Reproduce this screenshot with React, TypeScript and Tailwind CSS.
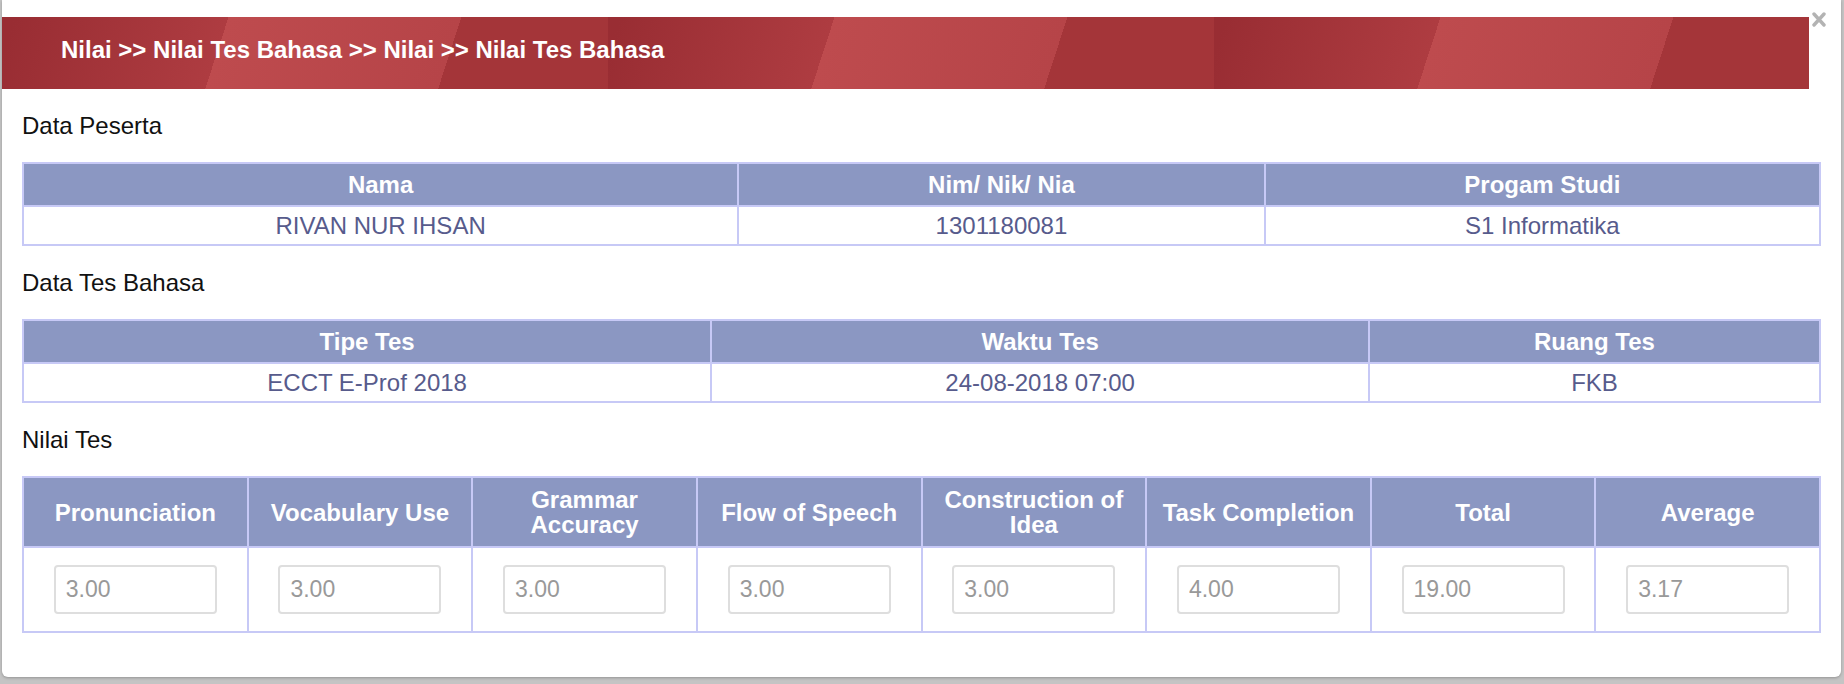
const font = "font-['Liberation_Sans',Arial,Helvetica,sans-serif]"

const peserta = {
  cols: ["39.8%", "29.3%", "30.9%"],
  head: ["Nama", "Nim/ Nik/ Nia", "Progam Studi"],
  row: ["RIVAN NUR IHSAN", "1301180081", "S1 Informatika"],
}

const tes = {
  cols: ["38.3%", "36.6%", "25.1%"],
  head: ["Tipe Tes", "Waktu Tes", "Ruang Tes"],
  row: ["ECCT E-Prof 2018", "24-08-2018 07:00", "FKB"],
}

const nilai = [
  { label: "Pronunciation", value: "3.00" },
  { label: "Vocabulary Use", value: "3.00" },
  { label: "Grammar Accuracy", value: "3.00" },
  { label: "Flow of Speech", value: "3.00" },
  { label: "Construction of Idea", value: "3.00" },
  { label: "Task Completion", value: "4.00" },
  { label: "Total", value: "19.00" },
  { label: "Average", value: "3.17" },
]

function SectionLabel({ children }: { children: string }) {
  return <div className="h-[73px] flex items-center text-[24px] leading-[28px] text-[#111]">{children}</div>
}

function InfoTable({ cols, head, row }: { cols: string[]; head: string[]; row: string[] }) {
  return (
    <table className="w-full table-fixed border-collapse border-2 border-[#c7c9f6]">
      <colgroup>
        {cols.map((w, i) => (
          <col key={i} style={{ width: w }} />
        ))}
      </colgroup>
      <thead>
        <tr className="bg-[#8b97c2]">
          {head.map((h) => (
            <th key={h} className="border-2 border-[#c7c9f6] py-[8px] px-2 text-[24px] leading-[25px] font-bold text-white text-center">
              {h}
            </th>
          ))}
        </tr>
      </thead>
      <tbody>
        <tr>
          {row.map((c) => (
            <td key={c} className="border-2 border-[#c7c9f6] py-[6px] px-2 text-[24px] leading-[25px] text-[#575b8c] text-center">
              {c}
            </td>
          ))}
        </tr>
      </tbody>
    </table>
  )
}

export default function App() {
  return (
    <div className={`w-[1844px] h-[684px] bg-[#c4c4c4] overflow-hidden ${font}`}>
      <div className="relative ml-[2px] w-[1839px] h-[677px] bg-white rounded-b-[6px] shadow-[0_1px_3px_rgba(0,0,0,0.25)] pt-[17px]">
        {/* header bar */}
        <div className="w-[1807px] h-[72px] flex items-center pb-[7px] pl-[59px] bg-repeat-x bg-[length:606px_100%] bg-[linear-gradient(108deg,#992d33_2%,#ae3c41_36%,#be4b4e_36%,#b64448_73%,#a43539_73%)]">
          <h3 className="text-[24px] leading-[28px] font-bold text-white">
            Nilai &gt;&gt; Nilai Tes Bahasa &gt;&gt; Nilai &gt;&gt; Nilai Tes Bahasa
          </h3>
        </div>
        <button className="absolute right-[14px] top-[11px] w-[16px] h-[17px] flex items-center justify-center">
          <svg width="14" height="15" viewBox="0 0 14 15">
            <path d="M2 2 L12 13 M12 2 L2 13" stroke="#b3b3b3" strokeWidth="3.4" strokeLinecap="round" />
          </svg>
        </button>

        <div className="px-[20px]">
          <SectionLabel>Data Peserta</SectionLabel>
          <InfoTable {...peserta} />

          <SectionLabel>Data Tes Bahasa</SectionLabel>
          <InfoTable {...tes} />

          <SectionLabel>Nilai Tes</SectionLabel>
          <table className="w-full table-fixed border-collapse border-2 border-[#c7c9f6]">
            <thead>
              <tr className="bg-[#8b97c2]">
                {nilai.map((n) => (
                  <th key={n.label} className="border-2 border-[#c7c9f6] py-[8px] px-3 h-[70px] text-[24px] leading-[25px] font-bold text-white text-center">
                    {n.label}
                  </th>
                ))}
              </tr>
            </thead>
            <tbody>
              <tr>
                {nilai.map((n) => (
                  <td key={n.label} className="border-2 border-[#c7c9f6] py-[17px] px-2">
                    <input
                      readOnly
                      value={n.value}
                      className={`block mx-auto w-[163px] h-[49px] border-2 border-[#dedede] rounded-[4px] px-[10px] text-[23px] text-[#999] bg-white outline-none ${font}`}
                    />
                  </td>
                ))}
              </tr>
            </tbody>
          </table>
        </div>
      </div>
    </div>
  )
}
